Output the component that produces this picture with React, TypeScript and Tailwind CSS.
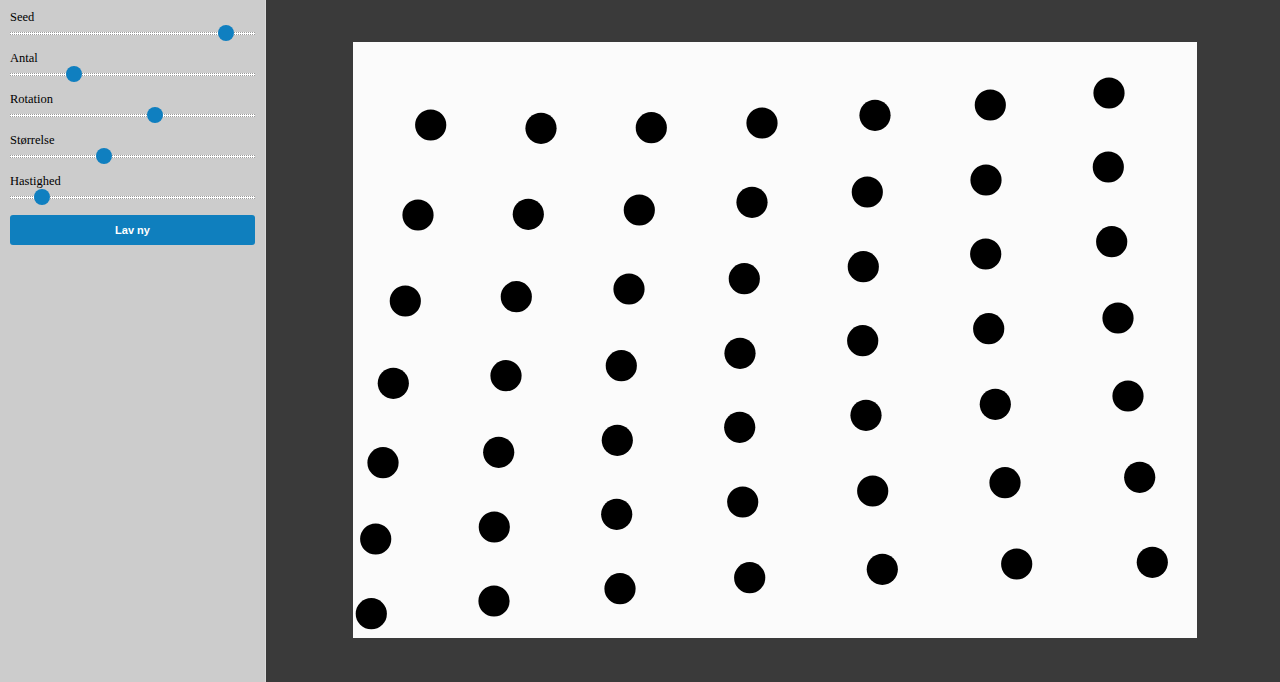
import React from "react";

const dots: [number, number][] = [
  [430.7, 125], [541, 128.3], [651.3, 127.7], [762, 123], [875, 115.3], [990.3, 105], [1109, 93],
  [418, 215], [528.3, 214.3], [639.3, 210], [752, 202.3], [867.3, 192], [986, 180], [1108.3, 167],
  [405.3, 301], [516.3, 296.7], [629, 289], [744.3, 278.7], [863.3, 266.7], [985.7, 254], [1111.7, 241.7],
  [393.3, 383.3], [506, 375.7], [621.3, 365.7], [740, 353.3], [862.7, 340.7], [988.7, 328.7], [1118, 318],
  [383, 462.7], [498.7, 452.3], [617.3, 440.3], [739.7, 427.3], [866, 415.3], [995.3, 404.3], [1128, 396],
  [375.7, 539], [494.3, 527], [616.7, 514.3], [742.7, 502], [872.7, 491], [1005, 482.7], [1139.7, 477.3],
  [371.3, 613.7], [494, 601], [620, 588.7], [749.7, 577.7], [882.3, 569.3], [1016.7, 564], [1152.3, 562.3],
];

const sliders: { label: string; value: number }[] = [
  { label: "Seed", value: 0.908 },
  { label: "Antal", value: 0.245 },
  { label: "Rotation", value: 0.598 },
  { label: "Størrelse", value: 0.376 },
  { label: "Hastighed", value: 0.105 },
];

function Slider({ value }: { value: number }) {
  return (
    <div className="relative h-[18px] w-full">
      <div className="absolute left-0 right-0 top-[8px] h-[3px] bg-[conic-gradient(#ffffff_75%,#9a9a9a_0)] bg-[length:2px_2px]" />
      <div
        className="absolute top-[1px] h-[16px] w-[16px] rounded-full bg-[#0f7fc0]"
        style={{ left: `calc(${value} * (100% - 16px))` }}
      />
    </div>
  );
}

export default function App() {
  return (
    <div className="flex h-[682px] w-[1280px] overflow-hidden">
      <div className="flex w-[266px] shrink-0 flex-col border-r border-[#d8d8d8] bg-[#cccccc] px-[10px] pt-[9px]">
        {sliders.map((s) => (
          <div key={s.label} className="mb-[8px] flex flex-col">
            <div className="h-[15px] text-[12.5px] leading-[17px] text-black [font-family:'Liberation_Serif',serif]">
              {s.label}
            </div>
            <Slider value={s.value} />
          </div>
        ))}
        <button className="mt-[1px] h-[30px] w-full rounded-[3px] bg-[#0f7fbe] text-[11px] font-bold text-white [font-family:'Liberation_Sans',sans-serif]">
          Lav ny
        </button>
      </div>
      <div className="flex-1 bg-[#3a3a3a] pl-[87px] pt-[42px]">
        <div className="h-[596px] w-[844px] bg-[#fbfbfb]">
          <svg width="844" height="596" viewBox="0 0 844 596">
            {dots.map(([x, y], i) => (
              <circle key={i} cx={x - 353} cy={y - 42} r={15.6} fill="#000" />
            ))}
          </svg>
        </div>
      </div>
    </div>
  );
}
